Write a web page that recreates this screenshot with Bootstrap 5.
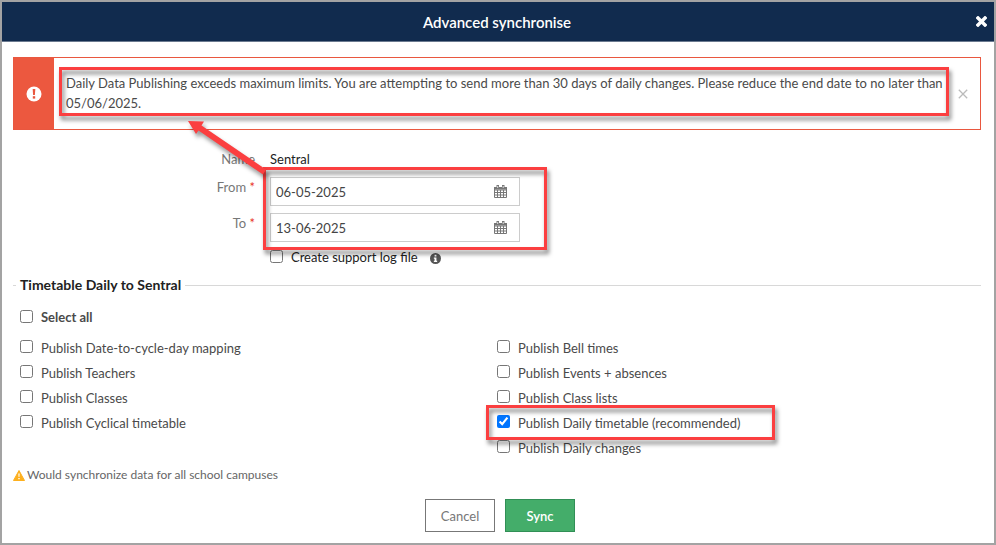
<!DOCTYPE html>
<html lang="en">
<head>
<meta charset="utf-8">
<meta name="viewport" content="width=device-width, initial-scale=1">
<title>Advanced synchronise</title>
<link href="https://cdn.jsdelivr.net/npm/bootstrap@5.3.0/dist/css/bootstrap.min.css" rel="stylesheet">
<style>
  body { font-family: Lato, "Liberation Sans", sans-serif; font-size: 13px; line-height: 20px; color: #4a4a4a; background: #fff; }
  .dialog-frame { border: 2px solid #a3a3a3; }
  .dialog-head { background: #112b4e; border-bottom: 1px solid #6b7a90; height: 40px; padding: 0 7px 0 16px; }
  .dialog-head h1 { font-size: 15px; line-height: 20px; }
  .dialog-body { padding: 15px 13px 0 11px; }
  .icon-btn { line-height: 0; }
  .limit-alert { border: 1px solid #e9573f; }
  .limit-side { width: 40px; background: #ec583f; }
  .limit-text { padding: 15px 0 16px 12px; }
  .limit-close { width: 34px; }
  .sync-form { padding-top: 19px; }
  .field-label { color: #777; }
  .req { color: #e8331e; }
  .field-col { padding-left: 15px; }
  .value-text { color: #222; }
  .date-box { width: 250px; height: 29px; border: 1px solid #ccc; background: #fff; padding: 0 12px 0 5px; }
  .date-box input { color: #444; font-size: 13px; line-height: 20px; }
  .dates { gap: 7px; padding-top: 8px; }
  .date-labels { gap: 16px; padding-top: 8px; }
  .tick { width: 13px; height: 13px; margin: 0; }
  .tick-row { gap: 8px; }
  .tick-row label { padding-top: 2px; }
  .log-row { color: #222; padding-top: 3px; }
  .scope { border-top: 1px solid #d8d8d8; margin-top: 8px; }
  .scope legend { font-size: 14px; line-height: 20px; color: #222; padding: 0 4px; margin-left: 3px; }
  .scope-inner { padding: 10px 0 0 7px; }
  .tick-list { padding: 7px 14px 0 0; }
  .tick-list .col-6 { padding-left: 7px; }
  .tick-list .tick-row { height: 25px; }
  .note { font-size: 12px; color: #666; gap: 2px; padding-top: 6px; }
  .actions { gap: 10px; padding: 14px 0 10px 6px; }
  .actions .btn { width: 70px; height: 33px; padding: 0; font-size: 13px; line-height: 20px; }
  .btn-plain { border: 1px solid #777; color: #777; background: #fff; }
  .btn-sync { border: 1px solid #318f56; color: #fff; background: #44ad6a; }
  /* annotation frames lie over the form */
  .callout { position: absolute; border: 3px solid #fb3f40; filter: drop-shadow(2px 4px 2px rgba(0,0,0,.5)); pointer-events: none; z-index: 2; }
  .callout-message { inset: 9px -3px 13px 5px; }
  .callout-dates { top: -2px; left: -7px; width: 284px; bottom: -8px; }
  .callout-daily { top: -4px; left: -11px; width: 289px; height: 35px; }
  .arrow { position: absolute; left: -84px; top: -57px; z-index: 3; filter: drop-shadow(2px 4px 2px rgba(0,0,0,.4)); pointer-events: none; }
</style>
<script src="https://cdn.jsdelivr.net/npm/bootstrap@5.3.0/dist/js/bootstrap.bundle.min.js"></script>
</head>
<body>
<main class="dialog-frame min-vh-100 d-flex flex-column">
  <header class="dialog-head d-flex align-items-center">
    <h1 class="flex-grow-1 text-center text-white fw-semibold m-0">Advanced synchronise</h1>
    <button type="button" class="icon-btn btn p-0 border-0" aria-label="Close">
      <svg width="11" height="11" viewBox="0 0 11 11"><path d="M2 2l7 7M9 2l-7 7" stroke="#fff" stroke-width="3.4" stroke-linecap="square" stroke-linejoin="round"/></svg>
    </button>
  </header>

  <div class="dialog-body">
    <div class="limit-alert d-flex" role="alert">
      <div class="limit-side d-flex align-items-center justify-content-center flex-shrink-0">
        <svg width="16" height="16" viewBox="0 0 16 16"><circle cx="8" cy="8" r="7.5" fill="#fff"/><path d="M6.7 3h2.6l-.4 6H7.100z" fill="#e9573f"/><rect x="6.800" y="10.200" width="2.400" height="2.400" fill="#e9573f"/></svg>
      </div>
      <div class="limit-text flex-grow-1 position-relative">Daily Data Publishing exceeds maximum limits. You are attempting to send more than 30 days of daily changes. Please reduce the end date to no later than 05/06/2025.
        <span class="callout callout-message"></span>
      </div>
      <button type="button" class="limit-close icon-btn btn p-0 border-0 flex-shrink-0" aria-label="Dismiss">
        <svg width="10" height="10" viewBox="0 0 10 10"><path d="M.8.8l8.400 8.400M9.200.8L.8 9.200" stroke="#bbb" stroke-width="1.300"/></svg>
      </button>
    </div>

    <form class="sync-form">
      <div class="row g-0">
        <div class="col-3 text-end field-label">Name</div>
        <div class="col-9 field-col value-text">Sentral</div>
      </div>
      <div class="row g-0">
        <div class="col-3 d-flex flex-column text-end field-label date-labels">
          <label for="from">From <span class="req">*</span></label>
          <label for="to">To <span class="req">*</span></label>
        </div>
        <div class="col-9 field-col">
          <div class="dates d-flex flex-column align-items-start position-relative">
            <div class="date-box d-flex align-items-center">
              <input id="from" type="text" value="06-05-2025" class="border-0 p-0 flex-grow-1 w-100">
              <svg class="flex-shrink-0" width="13" height="13" viewBox="0 0 13 13"><path d="M.5 2.500h12v10H.5zM.5 5h12M.5 7.500h12M.5 10h12M3.500 5v7.500M6.500 5v7.500M9.500 5v7.500" fill="none" stroke="#777"/><path d="M0 2h13v2.500H0zM2.500 0h2.500v3.500H2.500zM8 0h2.500v3.500H8z" fill="#777"/><path d="M3.700 1v2M9.200 1v2" stroke="#ddd"/></svg>
            </div>
            <div class="date-box d-flex align-items-center">
              <input id="to" type="text" value="13-06-2025" class="border-0 p-0 flex-grow-1 w-100">
              <svg class="flex-shrink-0" width="13" height="13" viewBox="0 0 13 13"><path d="M.5 2.500h12v10H.5zM.5 5h12M.5 7.500h12M.5 10h12M3.500 5v7.500M6.500 5v7.500M9.500 5v7.500" fill="none" stroke="#777"/><path d="M0 2h13v2.500H0zM2.500 0h2.500v3.500H2.500zM8 0h2.500v3.500H8z" fill="#777"/><path d="M3.700 1v2M9.200 1v2" stroke="#ddd"/></svg>
            </div>
            <span class="callout callout-dates"></span>
            <svg class="arrow" width="84" height="66" viewBox="0 0 84 66"><path d="M2 9l16 .5-2.500 4L80 57.500l-3 5L12.500 18.500 10 22z" fill="#fb3f40"/></svg>
          </div>
          <div class="log-row tick-row d-flex align-items-center">
            <input type="checkbox" id="log" class="tick"><label for="log">Create support log file</label>
            <svg class="ms-1 mt-1" width="11" height="11" viewBox="0 0 12 12"><circle cx="6" cy="6" r="6" fill="#555"/><path d="M5 2h2v1.800H5zM4.200 5H7v3.500h.8v1.300H4.200V8.500H5V6.200h-.8z" fill="#fff"/></svg>
          </div>
        </div>
      </div>

      <fieldset class="scope">
        <legend class="w-auto float-none mb-0 fw-bold">Timetable Daily to Sentral</legend>
        <div class="scope-inner">
          <div class="tick-row d-flex align-items-center fw-bold">
            <input type="checkbox" id="all" class="tick"><label for="all">Select all</label>
          </div>
        </div>
        <div class="row g-0 tick-list">
          <div class="col-6">
            <div class="tick-row d-flex align-items-center"><input type="checkbox" id="p1" class="tick"><label for="p1">Publish Date-to-cycle-day mapping</label></div>
            <div class="tick-row d-flex align-items-center"><input type="checkbox" id="p2" class="tick"><label for="p2">Publish Teachers</label></div>
            <div class="tick-row d-flex align-items-center"><input type="checkbox" id="p3" class="tick"><label for="p3">Publish Classes</label></div>
            <div class="tick-row d-flex align-items-center"><input type="checkbox" id="p4" class="tick"><label for="p4">Publish Cyclical timetable</label></div>
          </div>
          <div class="col-6">
            <div class="tick-row d-flex align-items-center"><input type="checkbox" id="p5" class="tick"><label for="p5">Publish Bell times</label></div>
            <div class="tick-row d-flex align-items-center"><input type="checkbox" id="p6" class="tick"><label for="p6">Publish Events + absences</label></div>
            <div class="tick-row d-flex align-items-center"><input type="checkbox" id="p7" class="tick"><label for="p7">Publish Class lists</label></div>
            <div class="tick-row d-flex align-items-center position-relative"><input type="checkbox" id="p8" class="tick" checked><label for="p8">Publish Daily timetable (recommended)</label><span class="callout callout-daily"></span></div>
            <div class="tick-row d-flex align-items-center"><input type="checkbox" id="p9" class="tick"><label for="p9">Publish Daily changes</label></div>
          </div>
        </div>
      </fieldset>

      <div class="note d-flex align-items-center">
        <svg width="12" height="11" viewBox="0 0 12 11"><path d="M6 .5L11.500 10.500H.5z" fill="#fdb01e" stroke="#fdb01e" stroke-linejoin="round"/><path d="M5.300 3.500h1.400l-.3 3.500h-.8zM5.300 8h1.400v1.300H5.300z" fill="#fff"/></svg>
        <span>Would synchronize data for all school campuses</span>
      </div>
      <div class="actions d-flex justify-content-center">
        <button type="button" class="btn btn-plain rounded-0">Cancel</button>
        <button type="submit" class="btn btn-sync rounded-0 fw-semibold">Sync</button>
      </div>
    </form>
  </div>
</main>
</body>
</html>
